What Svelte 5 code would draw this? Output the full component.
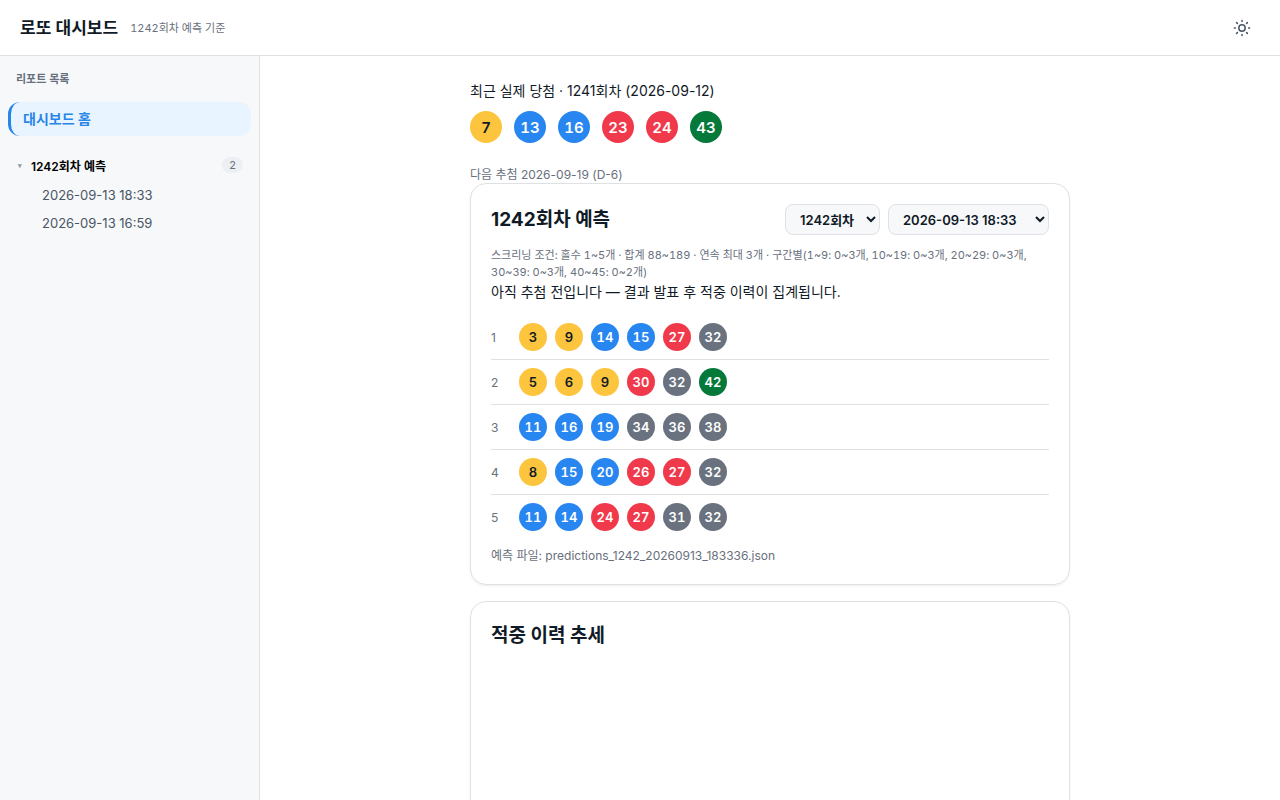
<script lang="ts">
  type Pick = { id: number; numbers: number[] };

  const latest = [7, 13, 16, 23, 24, 43];

  const picks: Pick[] = [
    { id: 1, numbers: [3, 9, 14, 15, 27, 32] },
    { id: 2, numbers: [5, 6, 9, 30, 32, 42] },
    { id: 3, numbers: [11, 16, 19, 34, 36, 38] },
    { id: 4, numbers: [8, 15, 20, 26, 27, 32] },
    { id: 5, numbers: [11, 14, 24, 27, 31, 32] },
  ];

  const reports = ['2026-09-13 18:33', '2026-09-13 16:59'];

  let round = $state('1242');
  let report = $state(reports[0]);
  let dark = $state(false);

  // Ball colour follows the decade of the number
  function tone(n: number): string {
    if (n <= 10) return 'yellow';
    if (n <= 20) return 'blue';
    if (n <= 30) return 'red';
    if (n <= 40) return 'gray';
    return 'green';
  }
</script>

<div class="app" class:dark>
  <header class="topbar">
    <h1>로또 대시보드</h1>
    <span class="subtitle">1242회차 예측 기준</span>
    <button class="theme-btn" aria-label="테마 전환" onclick={() => { dark = !dark; }}>
      <svg viewBox="0 0 18 18" width="18" height="18" fill="none" stroke="currentColor" stroke-width="1.5" stroke-linecap="round">
        <circle cx="9" cy="9" r="3.2" />
        <path d="M9 1.4v1M9 15.6v1M1.4 9h1M15.6 9h1M3.6 3.6l.8.8M13.6 13.6l.8.8M3.6 14.4l.8-.8M13.6 4.4l.8-.8" />
      </svg>
    </button>
  </header>

  <div class="body">
    <aside class="sidebar">
      <h2 class="side-title">리포트 목록</h2>
      <a class="home-link" href="#home">대시보드 홈</a>
      <details class="group" open>
        <summary>
          <span class="caret">▾</span>
          <span class="group-name">1242회차 예측</span>
          <span class="count">2</span>
        </summary>
        <nav class="reports">
          {#each reports as item}
            <a href="#report">{item}</a>
          {/each}
        </nav>
      </details>
    </aside>

    <main class="content">
      <section class="latest">
        <p class="lead">최근 실제 당첨 · 1241회차 (2026-09-12)</p>
        <div class="balls large">
          {#each latest as n}
            <span class="ball {tone(n)}">{n}</span>
          {/each}
        </div>
        <p class="note next">다음 추첨 2026-09-19 (D-6)</p>
      </section>

      <section class="card">
        <div class="card-head">
          <h2>1242회차 예측</h2>
          <select class="round" aria-label="회차" bind:value={round}>
            <option value="1242">1242회차</option>
          </select>
          <select class="report" aria-label="리포트" bind:value={report}>
            {#each reports as item}
              <option value={item}>{item}</option>
            {/each}
          </select>
        </div>
        <p class="note rules">
          스크리닝 조건: 홀수 1~5개 · 합계 88~189 · 연속 최대 3개 · 구간별(1~9: 0~3개, 10~19: 0~3개, 20~29: 0~3개,
          <span class="range">30~39: 0~3개,</span> 40~45: 0~2개)
        </p>
        <p class="lead">아직 추첨 전입니다 — 결과 발표 후 적중 이력이 집계됩니다.</p>
        <ol class="picks">
          {#each picks as pick}
            <li>
              <span class="index">{pick.id}</span>
              <div class="balls">
                {#each pick.numbers as n}
                  <span class="ball {tone(n)}">{n}</span>
                {/each}
              </div>
            </li>
          {/each}
        </ol>
        <p class="note">예측 파일: predictions_1242_20260913_183336.json</p>
      </section>

      <section class="card trend">
        <h2>적중 이력 추세</h2>
      </section>
    </main>
  </div>
</div>

<style>
  :global(body) {
    margin: 0;
  }

  .app {
    display: flex;
    flex-direction: column;
    height: 100vh;
    overflow: hidden;
    background: #fff;
    color: #111a27;
    font-family: Inter, 'Noto Sans CJK KR', sans-serif;
    font-size: 15px;
    word-break: keep-all;
  }

  .dark {
    background: #111a27;
    color: #f6f8fa;
  }

  h1,
  h2,
  p,
  ol {
    margin: 0;
    padding: 0;
  }

  a {
    text-decoration: none;
  }

  .topbar {
    display: flex;
    align-items: center;
    gap: 12px;
    height: 55px;
    flex-shrink: 0;
    padding: 0 20px;
    border-bottom: 1px solid #dfe1e5;
  }

  h1 {
    font-size: 17px;
    font-weight: 600;
    line-height: 24px;
  }

  .subtitle {
    color: #69707d;
    font-size: 11px;
    font-variant-numeric: tabular-nums;
    line-height: 16px;
  }

  .theme-btn {
    display: flex;
    align-items: center;
    justify-content: center;
    width: 36px;
    height: 36px;
    margin-left: auto;
    padding: 0;
    border: 0;
    background: none;
    color: #4b5563;
    cursor: pointer;
  }

  .body {
    display: flex;
    flex: 1;
    min-height: 0;
  }

  .sidebar {
    box-sizing: border-box;
    width: 260px;
    flex-shrink: 0;
    padding: 15px 8px;
    border-right: 1px solid #dfe1e5;
    background: #f6f8fa;
  }

  .side-title {
    padding: 0 8px;
    color: #69707d;
    font-size: 11px;
    font-weight: 600;
    line-height: 16px;
  }

  .home-link {
    display: block;
    margin-top: 15px;
    padding: 0 12px;
    border-left: 3px solid #2886e8;
    border-radius: 12px;
    background: #e8f4ff;
    color: #2886e8;
    font-size: 14px;
    font-weight: 600;
    line-height: 34px;
  }

  .group {
    margin-top: 15px;
  }

  summary {
    display: flex;
    align-items: center;
    height: 28px;
    padding: 0 8px;
    color: #000;
    font-size: 12px;
    font-weight: 600;
    list-style: none;
    cursor: pointer;
  }

  .caret {
    width: 13px;
    padding-left: 2px;
    color: #9298a2;
    font-size: 7px;
  }

  .group-name {
    flex: 1;
  }

  .count {
    padding: 0 7px;
    border-radius: 8px;
    background: #eceff3;
    color: #69707d;
    font-size: 11px;
    font-weight: 400;
    line-height: 16px;
  }

  .reports {
    display: flex;
    flex-direction: column;
    padding: 2px 8px 0 34px;
  }

  .reports a {
    color: #4b5563;
    font-size: 13px;
    line-height: 28px;
  }

  .content {
    display: flex;
    flex: 1;
    flex-direction: column;
    align-items: center;
    overflow: auto;
    scrollbar-width: none;
    padding: 24px 20px;
  }

  .latest,
  .card {
    box-sizing: border-box;
    width: 100%;
    max-width: 600px;
  }

  .lead {
    font-size: 14px;
    line-height: 22px;
  }

  .note {
    color: #69707d;
    font-size: 12px;
    line-height: 17px;
  }

  .rules {
    font-size: 11px;
    font-variant-numeric: tabular-nums;
  }

  .range {
    white-space: nowrap;
  }

  .next {
    margin-top: 23px;
  }

  .balls {
    display: flex;
    gap: 8px;
  }

  .ball {
    display: flex;
    align-items: center;
    justify-content: center;
    width: 28px;
    height: 28px;
    border-radius: 50%;
    color: #fff;
    font-size: 13px;
    font-weight: 600;
    font-variant-numeric: tabular-nums;
  }

  .large {
    gap: 12px;
    margin-top: 9px;
  }

  .large .ball {
    width: 32px;
    height: 32px;
    font-size: 15px;
  }

  .ball.yellow {
    background: #fdc53e;
    color: #111a27;
  }

  .blue {
    background: #2886f0;
  }

  .red {
    background: #f03a4b;
  }

  .gray {
    background: #69727e;
  }

  .green {
    background: #04793a;
  }

  .card {
    flex-shrink: 0;
    padding: 20px;
    border: 1px solid #dfe1e5;
    border-radius: 16px;
    box-shadow: 0 1px 2px rgba(0, 0, 0, 0.08);
  }

  .card-head {
    display: flex;
    align-items: center;
    gap: 8px;
    margin-bottom: 12px;
  }

  .card h2 {
    flex: 1;
    font-size: 19px;
    font-weight: 700;
    line-height: 28px;
  }

  select {
    height: 31px;
    padding: 0 0 0 10px;
    border: 1px solid #dfe1e5;
    border-radius: 8px;
    background: #f6f8fa;
    color: #111a27;
    font-family: inherit;
    font-size: 13px;
    font-weight: 600;
  }

  .round {
    width: 95px;
  }

  .report {
    width: 161px;
  }

  .picks {
    margin: 12px 0 8px;
    list-style: none;
  }

  .picks li {
    display: flex;
    align-items: center;
    height: 44px;
    border-bottom: 1px solid #dfe1e5;
  }

  .picks li:last-child {
    border-bottom: 0;
  }

  .index {
    width: 28px;
    color: #69707d;
    font-size: 12px;
  }

  .trend {
    min-height: 320px;
    margin-top: 16px;
  }
</style>
